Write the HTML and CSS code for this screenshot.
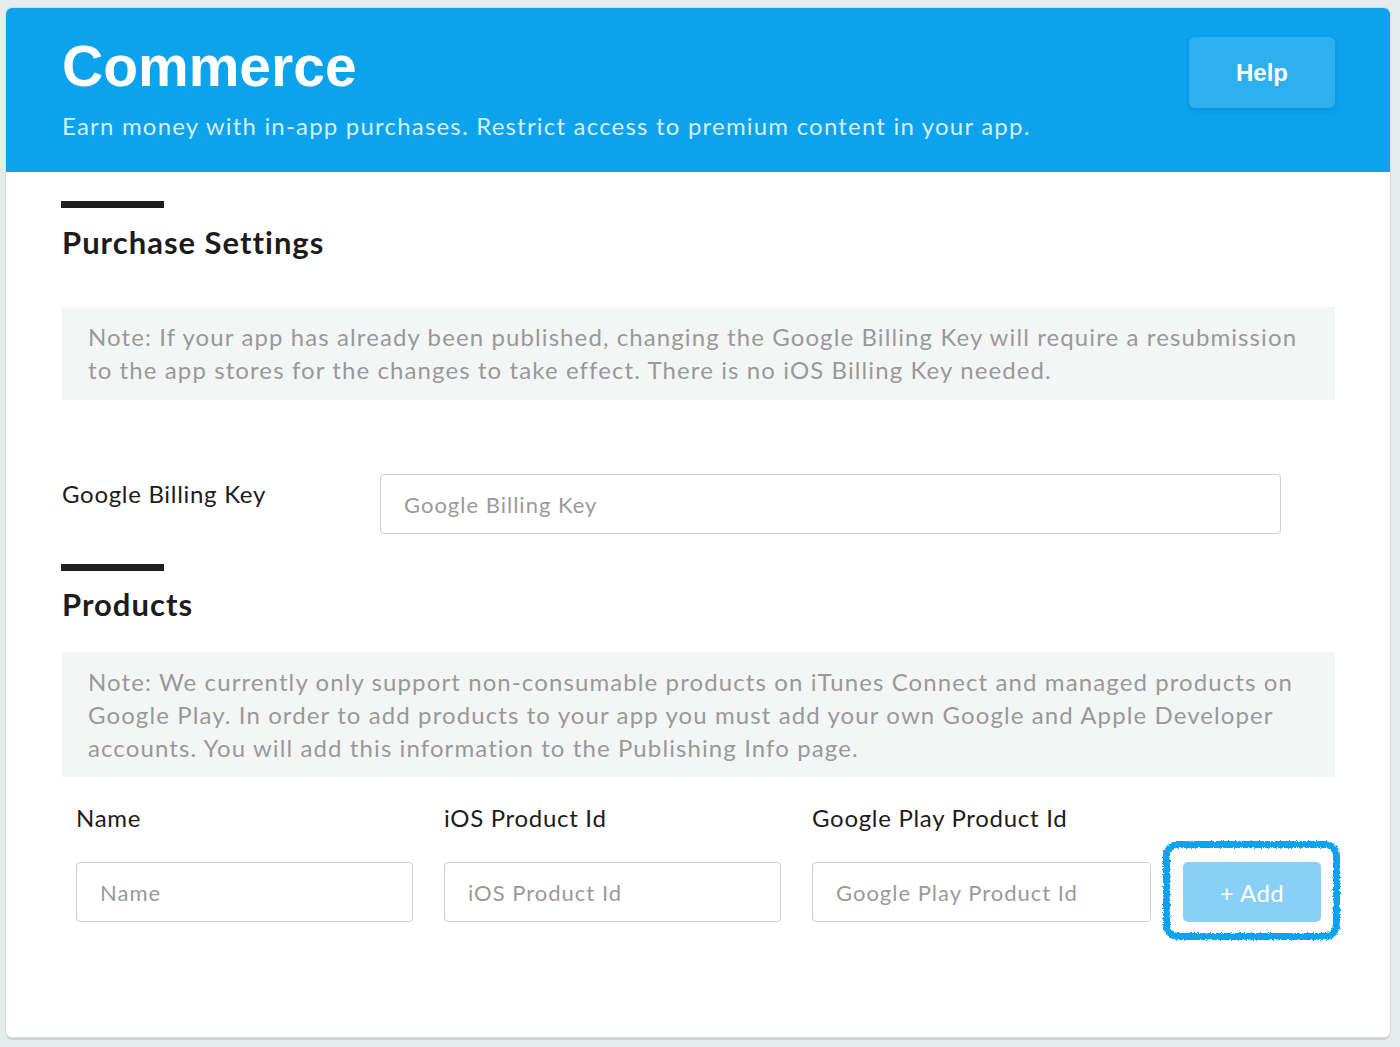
FILE: index.html
```html
<!DOCTYPE html>
<html>
<head>
<meta charset="utf-8">
<link rel="stylesheet" href="styles.css">
</head>
<body>
<svg class="defs" width="0" height="0" aria-hidden="true">
  <filter id="rough" x="-10%" y="-10%" width="120%" height="120%">
    <feTurbulence type="fractalNoise" baseFrequency="0.6" numOctaves="2" seed="3" result="n"/>
    <feDisplacementMap in="SourceGraphic" in2="n" scale="4" xChannelSelector="R" yChannelSelector="G"/>
  </filter>
</svg>
<div class="card">
  <header class="hero">
    <div class="hero-text">
      <h1 class="title">Commerce</h1>
      <p class="subtitle">Earn money with in-app purchases. Restrict access to premium content in your app.</p>
    </div>
    <button class="help">Help</button>
  </header>
  <main class="content">
    <section class="section">
      <div class="bar"></div>
      <h2 class="heading">Purchase Settings</h2>
      <div class="note">Note: If your app has already been published, changing the Google Billing Key will require a resubmission to the app stores for the changes to take effect. There is no iOS Billing Key needed.</div>
      <div class="field-row">
        <label class="field-label">Google Billing Key</label>
        <input class="input billing" type="text" placeholder="Google Billing Key">
      </div>
    </section>
    <section class="section products">
      <div class="bar"></div>
      <h2 class="heading heading-products">Products</h2>
      <div class="note note-products">Note: We currently only support non-consumable products on iTunes Connect and managed products on Google Play. In order to add products to your app you must add your own Google and Apple Developer accounts. You will add this information to the Publishing Info page.</div>
      <div class="product-grid">
        <div class="col-label">Name</div>
        <div class="col-label">iOS Product Id</div>
        <div class="col-label">Google Play Product Id</div>
        <div></div>
        <input class="input" type="text" placeholder="Name">
        <input class="input" type="text" placeholder="iOS Product Id">
        <input class="input" type="text" placeholder="Google Play Product Id">
        <div class="add-wrap">
          <span class="ring"></span>
          <button class="add">+ Add</button>
        </div>
      </div>
    </section>
  </main>
</div>
</body>
</html>
```

FILE: styles.css
```css
* { box-sizing: border-box; }
html, body { margin: 0; }
body {
  background: #e6ecec;
  padding: 8px 10px 10px 6px;
  font-family: Lato, "Noto Sans", sans-serif;
}
.defs { position: absolute; }
.card {
  width: 1384px;
  height: 1029px;
  background: #fff;
  border-radius: 6px;
  box-shadow: 0 0 0 1px #d9dede, 0 3px 0 #cfd4d4;
  overflow: hidden;
}
.hero {
  height: 164px;
  background: #0aa3ec;
  display: flex;
  justify-content: space-between;
  align-items: flex-start;
  padding: 0 55px 0 56px;
}
.title {
  margin: 26px 0 0;
  font-family: "Liberation Sans", Arial, sans-serif;
  font-weight: 700;
  font-size: 57px;
  line-height: 64px;
  color: #fff;
}
.subtitle {
  margin: 13px 0 0;
  font-size: 24px;
  line-height: 30px;
  color: #d7effc;
  letter-spacing: 1.2px;
}
.help {
  margin-top: 29px;
  width: 146px;
  height: 71px;
  border: none;
  border-radius: 6px;
  background: rgba(255,255,255,0.15);
  box-shadow: 0 2px 5px rgba(0,60,110,0.18);
  color: #fff;
  font-family: "Liberation Sans", Arial, sans-serif;
  font-weight: 700;
  font-size: 24px;
  padding: 0;
}
.content { padding: 0 55px; }
.section { padding-top: 29px; }
.products { padding-top: 30px; }
.bar {
  width: 103px;
  height: 7px;
  background: #1f1f1f;
}
.heading {
  margin: 16px 0 0 1px;
  font-size: 31px;
  line-height: 36px;
  font-weight: 700;
  color: #1c1c1c;
  letter-spacing: 1px;
}
.heading-products { margin-top: 15px; }
.note {
  margin-top: 47px;
  margin-left: 1px;
  background: #f4f6f6;
  padding: 13px 26px 14px;
  font-size: 24px;
  line-height: 33px;
  color: #999;
  letter-spacing: 1.1px;
}
.note-products { margin-top: 30px; padding-bottom: 13px; }
.field-row {
  display: flex;
  align-items: flex-start;
  margin-top: 74px;
  margin-left: 1px;
}
.field-label {
  width: 318px;
  font-size: 24px;
  line-height: 40px;
  color: #1c1c1c;
  letter-spacing: 0.7px;
}
.input {
  height: 60px;
  border: 1px solid #cfcfcf;
  border-radius: 4px;
  padding: 0 23px;
  font-family: Lato, "Noto Sans", sans-serif;
  font-size: 22px;
  letter-spacing: 1px;
  color: #333;
  background: #fff;
  outline: none;
  width: 100%;
}
.input::placeholder { color: #9a9a9a; }
.billing { width: 901px; }
.product-grid {
  display: grid;
  grid-template-columns: 337px 337px 339px 138px;
  column-gap: 31px;
  row-gap: 25px;
  margin: 22px 0 0 15px;
  width: 1245px;
}
.col-label {
  font-size: 24px;
  line-height: 38px;
  color: #1c1c1c;
  letter-spacing: 0.7px;
}
.add-wrap {
  position: relative;
  margin-left: 1px;
  width: 138px;
  height: 60px;
}
.ring {
  position: absolute;
  left: -20px;
  right: -19px;
  top: -21px;
  bottom: -18px;
  border: 7px solid #0aa3ec;
  border-radius: 15px;
  filter: url(#rough);
}
.add {
  position: relative;
  height: 60px;
  width: 138px;
  border: none;
  border-radius: 5px;
  background: #88d0f5;
  color: #fff;
  font-family: Lato, "Noto Sans", sans-serif;
  font-size: 24px;
  letter-spacing: 0.5px;
}
```
